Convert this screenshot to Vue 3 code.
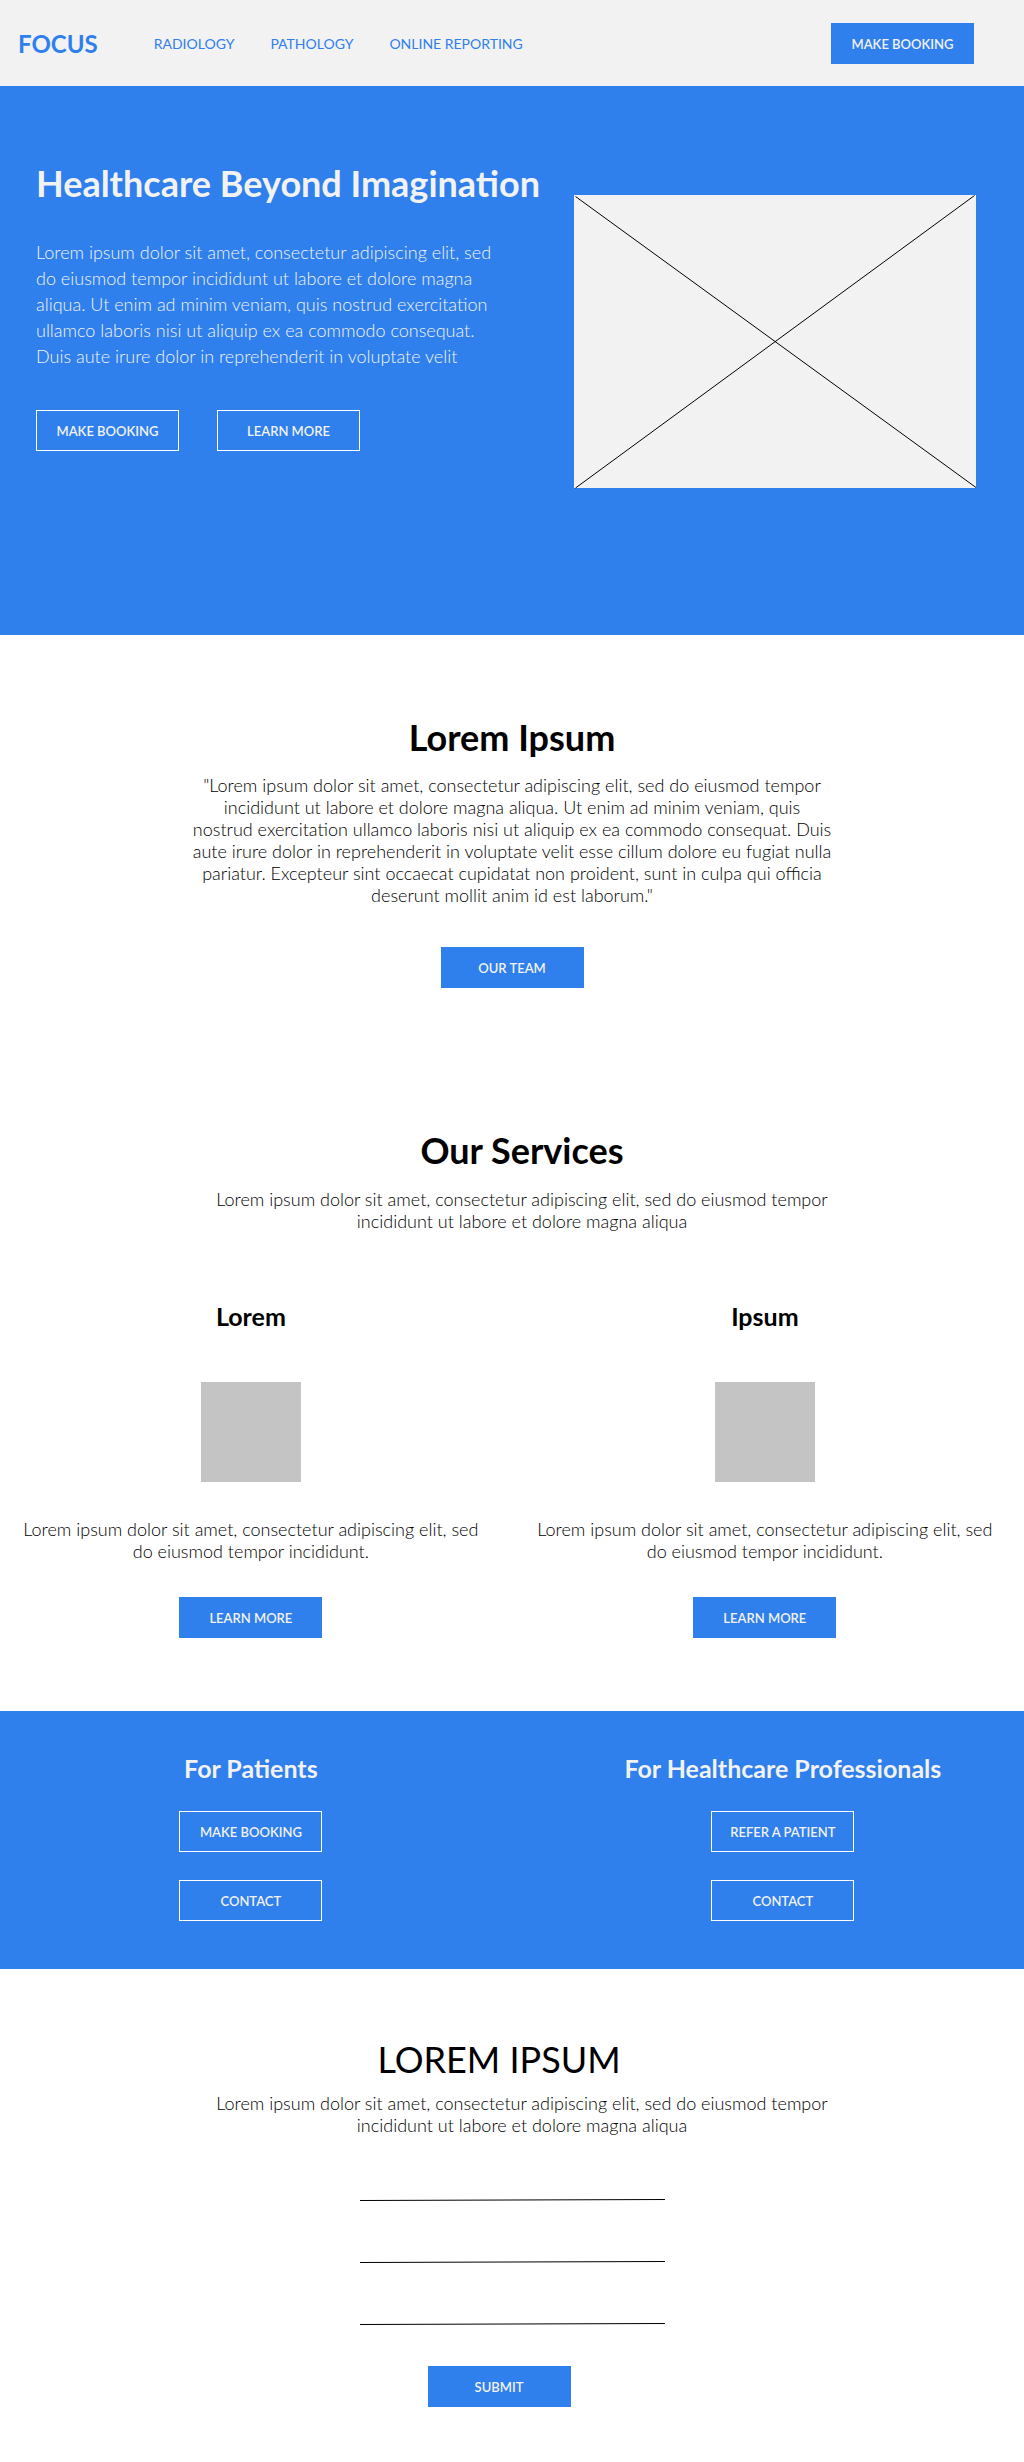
<script setup>
const lead = 'Lorem ipsum dolor sit amet, consectetur adipiscing elit, sed do eiusmod tempor incididunt ut labore et dolore magna aliqua'

const navLinks = ['RADIOLOGY', 'PATHOLOGY', 'ONLINE REPORTING']

const services = [
  { title: 'Lorem', text: 'Lorem ipsum dolor sit amet, consectetur adipiscing elit, sed do eiusmod tempor incididunt.' },
  { title: 'Ipsum', text: 'Lorem ipsum dolor sit amet, consectetur adipiscing elit, sed do eiusmod tempor incididunt.' },
]

const audiences = [
  { title: 'For Patients', actions: ['MAKE BOOKING', 'CONTACT'] },
  { title: 'For Healthcare Professionals', actions: ['REFER A PATIENT', 'CONTACT'] },
]

const fields = [
  { name: 'name', label: 'Name', type: 'text' },
  { name: 'email', label: 'Email', type: 'email' },
  { name: 'message', label: 'Message', type: 'text' },
]
</script>

<template>
  <div class="page">
    <header class="topbar">
      <a class="brand" href="#">FOCUS</a>
      <nav class="nav">
        <a v-for="link in navLinks" :key="link" href="#">{{ link }}</a>
      </nav>
      <button type="button" class="btn">MAKE BOOKING</button>
    </header>

    <main>
      <section class="hero">
        <div class="hero-copy">
          <h1>Healthcare Beyond Imagination</h1>
          <p>
            Lorem ipsum dolor sit amet, consectetur adipiscing elit, sed do eiusmod tempor
            incididunt ut labore et dolore magna aliqua. Ut enim ad minim veniam, quis nostrud
            exercitation ullamco laboris nisi ut aliquip ex ea commodo consequat. Duis aute irure
            dolor in reprehenderit in voluptate velit
          </p>
          <div class="hero-actions">
            <button type="button" class="btn outline">MAKE BOOKING</button>
            <button type="button" class="btn outline">LEARN MORE</button>
          </div>
        </div>
        <svg class="hero-image" viewBox="0 0 402 293" aria-hidden="true">
          <rect width="402" height="293" fill="#f2f2f2" />
          <path d="M1.5 1.5 402 292.5M1.5 293 400.5 .5" stroke="#000" fill="none" />
        </svg>
      </section>

      <section class="about">
        <h2>Lorem Ipsum</h2>
        <p class="text">
          "Lorem ipsum dolor sit amet, consectetur adipiscing elit, sed do eiusmod tempor incididunt
          ut labore et dolore magna aliqua. Ut enim ad minim veniam, quis nostrud exercitation
          ullamco laboris nisi ut aliquip ex ea commodo consequat. Duis aute irure dolor in
          reprehenderit in voluptate velit esse cillum dolore eu fugiat nulla pariatur. Excepteur
          sint occaecat cupidatat non proident, sunt in culpa qui officia deserunt mollit anim id
          est laborum."
        </p>
        <button type="button" class="btn">OUR TEAM</button>
      </section>

      <section class="services">
        <div class="intro">
          <h2>Our Services</h2>
          <p class="text">{{ lead }}</p>
        </div>
        <div class="split">
          <article v-for="service in services" :key="service.title" class="card">
            <h3>{{ service.title }}</h3>
            <div class="thumb"></div>
            <p class="text">{{ service.text }}</p>
            <button type="button" class="btn">LEARN MORE</button>
          </article>
        </div>
      </section>

      <section class="audiences split">
        <div v-for="group in audiences" :key="group.title" class="audience">
          <h3>{{ group.title }}</h3>
          <button v-for="action in group.actions" :key="action" type="button" class="btn outline">
            {{ action }}
          </button>
        </div>
      </section>

      <section class="contact">
        <h2 class="inset">LOREM IPSUM</h2>
        <div class="intro">
          <p class="text">{{ lead }}</p>
        </div>
        <form class="form" @submit.prevent>
          <div v-for="field in fields" :key="field.name" class="field">
            <input :type="field.type" :name="field.name" :aria-label="field.label" />
            <svg viewBox="0 0 305 2" preserveAspectRatio="none" aria-hidden="true">
              <path d="M0 1.5 305 .5" stroke="#000" fill="none" />
            </svg>
          </div>
          <div class="inset">
            <button type="submit" class="btn">SUBMIT</button>
          </div>
        </form>
      </section>
    </main>
  </div>
</template>

<style>
body {
  margin: 0;
  background: #fff;
}
</style>

<style scoped>
.page {
  --blue: #2f80ed;
  --pale: #f2f2f2;
  font-family: Lato, "Liberation Sans", sans-serif;
  font-size: 18px;
  font-weight: 300;
  line-height: 22px;
  color: #000;
}

h1,
h2,
h3,
p {
  margin: 0;
}

h1,
h2 {
  font-size: 36px;
  line-height: 44px;
  font-weight: 700;
}

h3 {
  font-size: 25px;
  line-height: 26px;
  font-weight: 700;
}

.btn {
  box-sizing: border-box;
  width: 143px;
  height: 41px;
  padding: 0;
  border: 1px solid var(--blue);
  border-radius: 0;
  background: var(--blue);
  color: var(--pale);
  font-family: inherit;
  font-size: 13px;
  line-height: 16px;
  font-weight: 600;
  white-space: nowrap;
  cursor: pointer;
}

.btn.outline {
  border-color: #fff;
}

.topbar {
  display: flex;
  align-items: center;
  box-sizing: border-box;
  height: 86px;
  padding: 1px 50px 0 18px;
  background: var(--pale);
}

.topbar .btn {
  margin-left: auto;
}

.brand {
  color: var(--blue);
  font-size: 24px;
  line-height: 28px;
  font-weight: 700;
  text-decoration: none;
}

.nav {
  display: flex;
  gap: 36px;
  margin-left: 56px;
}

.nav a {
  color: var(--blue);
  font-size: 14px;
  line-height: 16px;
  font-weight: 400;
  text-decoration: none;
}

.hero {
  display: flex;
  justify-content: space-between;
  padding: 75px 48px 147px 36px;
  background: var(--blue);
  color: var(--pale);
}

.hero h1 {
  white-space: nowrap;
}

.hero p {
  max-width: 465px;
  margin-top: 34px;
  line-height: 26px;
}

.hero-actions {
  display: flex;
  gap: 38px;
  margin-top: 41px;
}

.hero-image {
  flex: none;
  width: 402px;
  height: 293px;
  margin-top: 34px;
  overflow: visible;
}

.text {
  max-width: 640px;
  text-align: center;
}

.about,
.services,
.contact {
  display: flex;
  flex-direction: column;
  align-items: center;
}

.about {
  padding: 80px 0 140px;
}

.about .text {
  margin: 15px 0 41px;
}

.intro {
  display: flex;
  flex-direction: column;
  align-items: center;
  gap: 16px;
  padding-left: 20px;
}

.split {
  display: grid;
  grid-template-columns: 49% 51%;
  width: 100%;
}

.services {
  padding-bottom: 73px;
}

.services .split {
  margin-top: 71px;
}

.card,
.audience {
  display: flex;
  flex-direction: column;
  align-items: center;
}

.card + .card {
  padding-left: 4px;
}

.thumb {
  width: 100px;
  height: 100px;
  margin: 53px 0 36px;
  background: #c4c4c4;
}

.card .text {
  max-width: 464px;
  margin-bottom: 35px;
}

.audiences {
  padding: 44px 0 48px;
  background: var(--blue);
  color: var(--pale);
}

.audience {
  gap: 28px;
}

.audience h3 {
  margin-bottom: 2px;
}

.audience + .audience {
  padding-left: 40px;
}

.contact {
  padding: 68px 0 55px;
}

.contact h2 {
  margin-bottom: 11px;
  font-weight: 400;
}

.inset {
  padding-right: 26px;
}

.form {
  display: flex;
  flex-direction: column;
  align-items: center;
  gap: 20px;
  margin-top: 23px;
}

.field {
  display: flex;
  flex-direction: column;
  width: 305px;
}

.field input {
  box-sizing: border-box;
  width: 100%;
  height: 40px;
  padding: 0 4px;
  border: 0;
  outline: 0;
  background: transparent;
  font: inherit;
}

.field svg {
  display: block;
  width: 100%;
  height: 2px;
}

.form .inset {
  display: flex;
  margin-top: 21px;
}
</style>
